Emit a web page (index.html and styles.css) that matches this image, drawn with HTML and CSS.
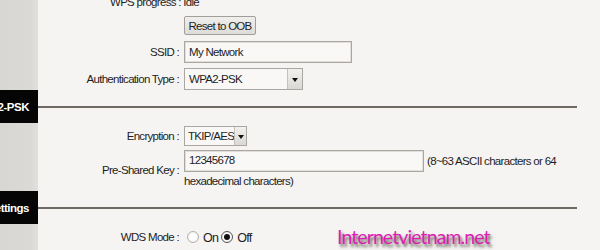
FILE: index.html
```html
<!DOCTYPE html>
<html lang="en">
<head>
    <meta charset="UTF-8">
    <title>Wireless Security</title>
    <link rel="stylesheet" href="styles.css">
</head>
<body>
    <div class="page">
        <div class="row wps-row">
            <span class="wps-text">WPS progress : Idle</span>
        </div>
        <div class="row btn-row">
            <div class="label"></div>
            <button class="btn">Reset to OOB</button>
        </div>
        <div class="row field">
            <div class="label">SSID :</div>
            <div class="input ssid">My Network</div>
        </div>
        <div class="row field">
            <div class="label">Authentication Type :</div>
            <div class="select auth"><span class="sel-text">WPA2-PSK</span><span class="arrow"></span></div>
        </div>

        <div class="section">
            <div class="tab"><span>WPA/WPA2-PSK</span></div>
            <div class="rule"></div>
        </div>

        <div class="row field enc-row">
            <div class="label">Encryption :</div>
            <div class="select enc"><span class="sel-text">TKIP/AES</span><span class="arrow"></span></div>
        </div>
        <div class="row field psk-row">
            <div class="label">Pre-Shared Key :</div>
            <div class="psk">
                <div class="psk-line">
                    <div class="input key">12345678</div>
                    <span class="hint">(8~63 ASCII characters or 64</span>
                </div>
                <div class="hint-2">hexadecimal characters)</div>
            </div>
        </div>

        <div class="section section-2">
            <div class="tab"><span>WDS Settings</span></div>
            <div class="rule"></div>
        </div>

        <div class="row field wds-row">
            <div class="label">WDS Mode :</div>
            <div class="radios">
                <span class="radio"></span><span class="radio-text">On</span>
                <span class="radio checked"></span><span class="radio-text">Off</span>
            </div>
        </div>
        <div class="row field">
            <div class="label"></div>
            <div class="select next"></div>
        </div>

        <div class="watermark">Internetvietnam.net</div>
    </div>
</body>
</html>
```

FILE: styles.css
```css
html, body {
    margin: 0;
    padding: 0;
    overflow: hidden;
}
body {
    font-family: "Liberation Sans", Arial, sans-serif;
    font-size: 11.5px;
    letter-spacing: -0.7px;
    color: #1e1e1e;
}
.page {
    position: relative;
    display: flow-root;
    height: 250px;
    overflow: hidden;
    padding-left: 38px;
    background: linear-gradient(to right, #d8d6d3 0, #dcdad7 32px, #e2e0dd 38px, #f5f4f2 38px);
}
.row {
    display: flex;
    align-items: center;
}
.label {
    width: 141px;
    text-align: right;
    flex-shrink: 0;
    margin-right: 5px;
    white-space: nowrap;
}
.wps-row {
    height: 20px;
    margin-top: -8px;
    padding-left: 72px;
}
.btn-row {
    margin-top: 4px;
    height: 19px;
}
.btn {
    font-family: inherit;
    font-size: 11.5px;
    letter-spacing: -0.7px;
    white-space: nowrap;
    color: #1e1e1e;
    width: 72px;
    height: 19px;
    padding: 0;
    border: 1px solid #a29f9b;
    border-radius: 2px;
    background: linear-gradient(#f0efed, #dedcd9);
}
.field {
    margin-top: 5px;
}
.btn-row + .field {
    margin-top: 6px;
}
.input {
    box-sizing: border-box;
    height: 22px;
    line-height: 20px;
    padding-left: 4px;
    background: #f9f8f7;
    border: 1px solid #aaa6a1;
    box-shadow: inset 0 0 0 1px #e2dfdb;
}
.ssid {
    width: 168px;
}
.select {
    box-sizing: border-box;
    display: flex;
    height: 22px;
    background: #f9f8f7;
    border: 1px solid #aaa6a1;
}
.sel-text {
    flex: 1;
    line-height: 20px;
    padding-left: 4px;
    white-space: nowrap;
}
.arrow {
    width: 14px;
    border-left: 1px solid #c4c0bb;
    background: linear-gradient(#f2f1ef, #dad8d4);
    display: flex;
    align-items: center;
    justify-content: center;
}
.arrow::after {
    content: "";
    border-left: 3px solid transparent;
    border-right: 3px solid transparent;
    border-top: 4px solid #111;
    margin-top: 2px;
}
.auth {
    width: 119px;
}
.section {
    display: flex;
    align-items: center;
    height: 33px;
    margin-left: -38px;
}
.tab {
    width: 38px;
    height: 33px;
    flex-shrink: 0;
    background: #050505;
    color: #fff;
    font-weight: bold;
    letter-spacing: -0.5px;
    display: flex;
    align-items: center;
    justify-content: flex-end;
    overflow: hidden;
    white-space: nowrap;
}
.tab span {
    padding-right: 9px;
}
.rule {
    width: 539px;
    height: 2px;
    background: #6f6963;
}
.enc-row {
    margin-top: 3px;
}
.enc {
    width: 63px;
    height: 20px;
}
.enc .sel-text {
    line-height: 18px;
    padding-left: 3px;
}
.enc .arrow {
    width: 12px;
}
.psk-row {
    margin-top: 4px;
    height: 40px;
}
.psk-line {
    display: flex;
    align-items: center;
}
.key {
    width: 240px;
    line-height: 18px;
}
.hint {
    margin-left: 3px;
}
.hint-2 {
    line-height: 18px;
}
.section-2 {
    margin-top: 1px;
}
.wds-row {
    margin-top: 2px;
    height: 21px;
}
.radios {
    display: flex;
    align-items: center;
    padding-left: 3px;
}
.radio {
    box-sizing: border-box;
    width: 12px;
    height: 12px;
    border-radius: 50%;
    border: 1px solid #b5b2ae;
    background: radial-gradient(circle, #fff 40%, #e6e4e1 100%);
    display: flex;
    align-items: center;
    justify-content: center;
}
.radio.checked {
    border-color: #555;
}
.radio.checked::after {
    content: "";
    width: 6px;
    height: 6px;
    border-radius: 50%;
    background: #111;
}
.radio-text {
    margin: 3px 3px 0 4px;
    font-size: 12.5px;
}
.next {
    width: 43px;
    margin-top: 1px;
}
.watermark {
    position: absolute;
    left: 337px;
    top: 225px;
    font-family: Lato, "Open Sans", sans-serif;
    font-size: 19.5px;
    letter-spacing: -0.9px;
    color: #da1eb2;
    text-shadow: 2px 3px 3px rgba(40, 30, 20, 0.7);
}
```
